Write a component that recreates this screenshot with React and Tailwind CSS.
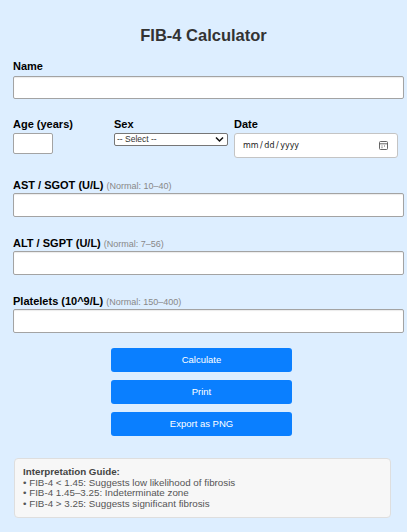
import React from 'react';

const font = { fontFamily: '"Liberation Sans", Arial, sans-serif' };

const Field = ({ label, hint, first }) => (
  <div className={first ? 'mt-[20px]' : 'mt-[19px]'}>
    <label className="block h-[14px] text-[11px] leading-[14px] font-bold text-black">
      {label}
      {hint && <span className="ml-[3px] text-[9px] font-normal text-[#888]">{hint}</span>}
    </label>
    <input
      type="text"
      className="mt-[1px] block h-[24px] w-[391px] rounded-[2px] border border-[#a3a3a3] bg-white shadow-[inset_0_1px_1px_rgba(0,0,0,0.08)]"
    />
  </div>
);

export default function App() {
  return (
    <div className="min-h-screen bg-[#ddeeff] pl-[13px] pt-[25px] text-[#333]" style={font}>
      <h1 className="pr-[13px] text-center text-[16.5px] leading-[20px] font-bold text-[#333]">
        FIB-4 Calculator
      </h1>

      {/* Name */}
      <div className="mt-[14px]">
        <label className="block h-[14px] text-[11px] leading-[14px] font-bold text-black">Name</label>
        <input
          type="text"
          className="mt-[3px] block h-[23px] w-[391px] rounded-[2px] border border-[#a3a3a3] bg-white shadow-[inset_0_1px_1px_rgba(0,0,0,0.08)]"
        />
      </div>

      {/* Age / Sex / Date */}
      <div className="mt-[18px] flex">
        <div className="w-[101px]">
          <label className="block h-[14px] text-[11px] leading-[14px] font-bold text-black">Age (years)</label>
          <input
            type="text"
            className="mt-[2px] block h-[21px] w-[40px] rounded-[2px] border border-[#a3a3a3] bg-white"
          />
        </div>
        <div className="w-[120px]">
          <label className="block h-[14px] text-[11px] leading-[14px] font-bold text-black">Sex</label>
          <div className="relative mt-[2px] w-[114px]">
            <select className="block h-[13px] w-full appearance-none rounded-[2px] border border-[#767676] bg-white pl-[2px] text-[8.5px] leading-[11px] text-[#333]">
              <option>-- Select --</option>
              <option>Male</option>
              <option>Female</option>
            </select>
            <svg
              className="pointer-events-none absolute right-[4px] top-[3px]"
              width="9"
              height="7"
              viewBox="0 0 9 7"
              fill="none"
              stroke="#111"
              strokeWidth="1.5"
            >
              <path d="M1 1.5 L4.5 5 L8 1.5" />
            </svg>
          </div>
        </div>
        <div className="w-[164px]">
          <label className="block h-[14px] text-[11px] leading-[14px] font-bold text-black">Date</label>
          <div className="mt-[2px] flex h-[25px] w-[164px] items-center justify-between rounded-[3px] border border-[#c4c4c4] bg-white pl-[8px] pr-[9px]">
            <span className="text-[8px] text-[#222]" style={{ fontFamily: '"DejaVu Sans", sans-serif' }}>
              mm<span className="mx-[1.5px]">/</span>dd<span className="mx-[1.5px]">/</span>yyyy
            </span>
            <svg width="9" height="9" viewBox="0 0 9 9" fill="none" stroke="#555" strokeWidth="0.9">
              <rect x="0.5" y="0.5" width="8" height="8" rx="1" />
              <path d="M0.5 2.8 H8.5" />
              <path d="M2.5 5 H3.5 M5 5 H6 M2.5 6.7 H3.5" />
            </svg>
          </div>
        </div>
      </div>

      <Field first label="AST / SGOT (U/L)" hint="(Normal: 10–40)" />
      <Field label="ALT / SGPT (U/L)" hint="(Normal: 7–56)" />
      <Field label="Platelets (10^9/L)" hint="(Normal: 150–400)" />

      {/* Buttons */}
      <div className="mt-[15px] flex flex-col items-center gap-[8px] pr-[17px]">
        {['Calculate', 'Print', 'Export as PNG'].map((t) => (
          <button
            key={t}
            className="h-[24px] w-[181px] rounded-[3px] bg-[#0a7fff] text-[9.5px] text-white"
          >
            {t}
          </button>
        ))}
      </div>

      {/* Guide */}
      <div className="mt-[22px] ml-[1px] w-[377px] rounded-[4px] border border-[#dedede] bg-[#f7f7f7] px-[8px] py-[8px] text-[9.8px] leading-[10.5px] text-[#555]">
        <div className="font-bold text-[#444]">Interpretation Guide:</div>
        <div>• FIB-4 &lt; 1.45: Suggests low likelihood of fibrosis</div>
        <div>• FIB-4 1.45–3.25: Indeterminate zone</div>
        <div>• FIB-4 &gt; 3.25: Suggests significant fibrosis</div>
      </div>
    </div>
  );
}
